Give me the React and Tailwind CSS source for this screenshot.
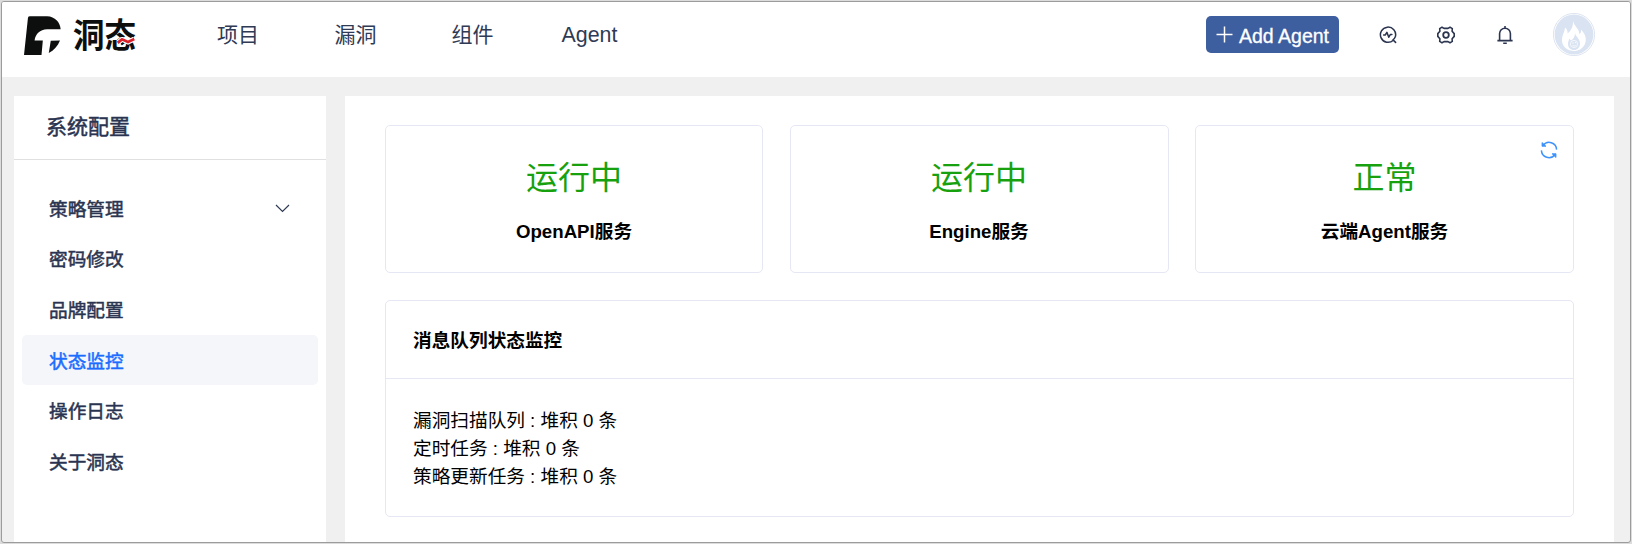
import React from "react";

const navItems = [
  { label: "项目", cls: "w-[117.5px]" },
  { label: "漏洞", cls: "w-[117px]" },
  { label: "组件", cls: "w-[110px]" },
];

const menu = ["策略管理", "密码修改", "品牌配置", "状态监控", "操作日志", "关于洞态"];

const services = [
  { status: "运行中", name: "OpenAPI服务" },
  { status: "运行中", name: "Engine服务" },
  { status: "正常", name: "云端Agent服务", refresh: true },
];

const queues = ["漏洞扫描队列 : 堆积 0 条", "定时任务 : 堆积 0 条", "策略更新任务 : 堆积 0 条"];

function Logo() {
  return (
    <div className="flex items-center">
      <svg viewBox="42 29 112 118" className="h-[39px] w-[37px]" fill="#0d0f0f">
        <path d="M60 30H112C136 31 151 48 153 69H112C90 70 77 83 74 103H99L95 147H42L54 34Q55 30 60 30Z" />
        <path d="M123 104L151 103C144 120 133 132 117 141Z" />
      </svg>
      <div className="relative ml-[12px] h-[40px] w-[64px]">
        <span className="block origin-left scale-y-[1.08] whitespace-nowrap text-[31.5px] leading-[37px] font-bold text-[#0d0f0f]">
          洞态
        </span>
        <svg viewBox="0 0 18 8" className="absolute top-[22px] left-[44px] h-[8px] w-[18px]">
          <path d="M0.7 5.8L5 2.3L11 5L17.3 2" fill="none" stroke="#fff" strokeWidth="5" />
          <path d="M0.7 5.8L5 2.3L11 5L17.3 2" fill="none" stroke="#d8232a" strokeWidth="2.8" />
        </svg>
      </div>
    </div>
  );
}

function InspectIcon() {
  return (
    <svg viewBox="0 0 18 18" className="size-[18px]" fill="none" stroke="#2b3550" strokeWidth="1.5" strokeLinecap="round" strokeLinejoin="round">
      <path d="M14.3 14.2A7.6 7.6 0 1 1 16.4 10.6M14 13.9L16.6 16.4M16.4 10.6A7.6 7.6 0 0 1 14 13.9" />
      <path d="M4.6 9H6.2L7.9 6.4L9.8 11.2L11.3 8.6H12.9" />
    </svg>
  );
}

function GearIcon() {
  return (
    <svg viewBox="0 0 18 18" className="size-[18px]" fill="none" stroke="#2b3550" strokeWidth="1.6" strokeLinejoin="round">
      <path d="M5 1.2L7 2.4H11L13 1.2L15.3 2.7L15.1 5.3L17.2 7.6V10.4L15.1 12.7L15.3 15.3L13 16.8L11 15.6H7L5 16.800L2.700 15.300L2.900 12.700L0.800 10.400V7.600L2.900 5.300L2.700 2.700Z" />
      <circle cx="9" cy="9" r="2.8" strokeWidth="1.8" />
    </svg>
  );
}

function BellIcon() {
  return (
    <svg viewBox="0 0 18 20" className="h-[20px] w-[18px]" fill="none" stroke="#2b3550" strokeWidth="1.6">
      <path d="M3.6 15.4V8.6A5.4 5.4 0 0 1 14.4 8.6V15.4M1.4 15.6H16.6M9 3V1M7.2 18.2H10.8" />
    </svg>
  );
}

function Avatar() {
  return (
    <svg viewBox="0 0 42 43" className="h-[43px] w-[42px]">
      <ellipse cx="21" cy="21.5" rx="20.6" ry="21.1" fill="#fff" stroke="#d3ddec" strokeWidth="0.8" />
      <ellipse cx="21" cy="21.5" rx="19.4" ry="19.9" fill="#d9e3f2" />
      <path d="M20 7C20.3 13 26.5 15.5 26.3 21C28 20 28.3 18.5 28 16.5C31.5 20 33 23.5 32.8 27C32.5 33.5 27.5 37.8 21.5 38C14 38 9.2 33.5 9 27.5C8.8 22.5 11.5 19.5 12 14.5C14 16 14.8 18 14.6 20.5C18.5 17.5 20.5 12.5 20 7Z" fill="#fff" />
      <path d="M22 20C22.5 23.5 27 25.5 27 30.5C27 34.5 24.5 37 21.2 37C17.5 37 15 34.5 15 31C15 28.5 16 27.5 16.2 25.5L18 27.5C20.5 26 22 23.5 22 20Z" fill="#d9e3f2" />
      <circle cx="21" cy="31" r="3.6" fill="none" stroke="#fff" strokeWidth="0.7" />
      <circle cx="20" cy="30" r="0.7" fill="#fff" />
      <circle cx="22.6" cy="29.6" r="0.7" fill="#fff" />
      <path d="M19.5 32.5Q21 33.5 22.7 32.3" fill="none" stroke="#fff" strokeWidth="0.7" />
    </svg>
  );
}

function RefreshIcon() {
  return (
    <svg viewBox="0 0 18 18" className="size-[18px]" fill="none" stroke="#3f93fb" strokeWidth="1.5">
      <path d="M16.6 8.6A7.5 7.5 0 0 0 3 4.5M1.4 9.4A7.5 7.5 0 0 0 15 13.5" />
      <path d="M2 1.5V5.3H6ZM16 16.500V12.700H12Z" fill="#3f93fb" strokeWidth="0.8" />
    </svg>
  );
}

export default function App() {
  return (
    <div className="h-[544px] w-[1632px] bg-[#dcdcdc] p-px font-['Noto_Sans_CJK_SC',sans-serif]">
      <div className="flex h-full flex-col overflow-hidden rounded-[3px] border border-[#9c9c9c] bg-[#f0f0f0]">
        <header className="flex h-[75px] shrink-0 items-start bg-white pl-[22px]">
          <div className="mt-[13px] w-[193px]">
            <Logo />
          </div>
          <nav className="mt-[16px] flex text-[21px] leading-[31px] text-[#2f3a55]">
            {navItems.map((n) => (
              <a key={n.label} className={n.cls}>{n.label}</a>
            ))}
            <a className="pt-[2px] font-['Liberation_Sans',sans-serif] text-[21.4px]">Agent</a>
          </nav>
          <div className="ml-auto flex h-[65px] items-center pr-[35px]">
            <button className="flex h-[37px] w-[133px] items-center rounded-[5px] bg-[#3d5e9f] pl-[10px] text-white">
              <svg viewBox="0 0 17 17" className="size-[17px]" stroke="#fff" strokeWidth="1.5">
                <path d="M8.5 0.5V16.5M0.5 8.5H16.5" />
              </svg>
              <span className="ml-[6px] pt-[4px] font-['Liberation_Sans',sans-serif] text-[19.5px] whitespace-nowrap [-webkit-text-stroke:0.3px_#fff]">Add Agent</span>
            </button>
            <div className="ml-[39.5px]"><InspectIcon /></div>
            <div className="ml-[40px]"><GearIcon /></div>
            <div className="ml-[41px]"><BellIcon /></div>
            <div className="ml-[39.5px]"><Avatar /></div>
          </div>
        </header>

        <div className="flex min-h-0 flex-1 gap-[19px] pt-[19px] pr-[16px] pl-[12px]">
          <aside className="w-[312px] shrink-0 bg-white text-[#2a3450]">
            <h2 className="h-[64px] border-b border-[#e0e0e2] pl-[32px] text-[21px] leading-[59px] [-webkit-text-stroke:0.5px_currentColor]">系统配置</h2>
            <ul className="mt-[23px] px-[8px]">
              {menu.map((m, i) => (
                <li
                  key={m}
                  className={
                    "flex h-[50.6px] items-center justify-between rounded-[5px] pr-[28px] pb-[1px] pl-[27px] text-[18.67px] [-webkit-text-stroke:0.5px_currentColor] " +
                    (m === "状态监控" ? "bg-[#f4f6fa] text-[#1a6dff]" : "")
                  }
                >
                  {m}
                  {i === 0 && (
                    <svg viewBox="0 0 15 9" className="mt-[1px] h-[9px] w-[15px]" fill="none" stroke="#2f3a55" strokeWidth="1.2">
                      <path d="M1 1L7.5 7.5L14 1" />
                    </svg>
                  )}
                </li>
              ))}
            </ul>
          </aside>

          <main className="min-w-0 flex-1 bg-white pt-[29px] pr-[40px] pl-[40px] text-black">
            <div className="grid grid-cols-[378fr_379fr_379fr] gap-[26.5px]">
              {services.map((s) => (
                <section key={s.name} className="relative h-[148px] rounded-[5px] border border-[#e6e7f4] text-center">
                  <div className="mt-[25px] text-[32px] leading-[48px] text-[#18a10f]">{s.status}</div>
                  <div className="mt-[19px] font-['Liberation_Sans','Noto_Sans_CJK_SC',sans-serif] text-[18.67px] leading-[28px] font-bold">{s.name}</div>
                  {s.refresh && (
                    <div className="absolute top-[15px] right-[15px]"><RefreshIcon /></div>
                  )}
                </section>
              ))}
            </div>
            <section className="mt-[27px] h-[217px] rounded-[5px] border border-[#e6e7f4]">
              <h3 className="h-[78px] border-b border-[#e6e7f4] pl-[27px] text-[18.67px] leading-[75px] font-bold">消息队列状态监控</h3>
              <div className="pt-[28px] pl-[27px] font-['Liberation_Sans','Noto_Sans_CJK_SC',sans-serif] text-[18.67px] leading-[28px]">
                {queues.map((q) => (
                  <p key={q}>{q}</p>
                ))}
              </div>
            </section>
          </main>
        </div>
      </div>
    </div>
  );
}
